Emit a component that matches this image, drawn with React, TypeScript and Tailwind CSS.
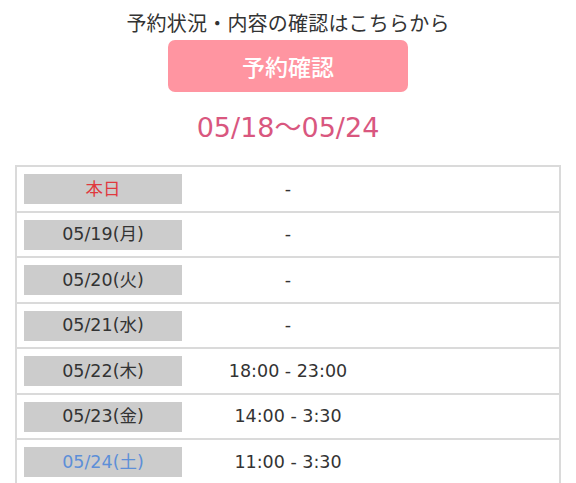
const rows = [
  { label: "本日", time: "-", tone: "text-[#e0393e]" },
  { label: "05/19(月)", time: "-", tone: "text-[#333333]" },
  { label: "05/20(火)", time: "-", tone: "text-[#333333]" },
  { label: "05/21(水)", time: "-", tone: "text-[#333333]" },
  { label: "05/22(木)", time: "18:00 - 23:00", tone: "text-[#333333]" },
  { label: "05/23(金)", time: "14:00 - 3:30", tone: "text-[#333333]" },
  { label: "05/24(土)", time: "11:00 - 3:30", tone: "text-[#5d8fd8]" },
];

export default function App() {
  return (
    <div className="w-[576px] h-[483px] overflow-hidden bg-white font-['Noto_Sans_CJK_JP','Noto_Sans',sans-serif] text-[#333333]">
      <div className="flex flex-col items-center pt-[10px]">
        <p className="text-[20px] leading-[26px] tracking-[0.2px]">予約状況・内容の確認はこちらから</p>
        <button className="mt-[4px] w-[240px] h-[52px] rounded-[7px] bg-[#ff95a1] text-white text-[23px] font-medium flex items-center justify-center">
          予約確認
        </button>
        <p className="mt-[19px] text-[27px] leading-[34px] text-[#d9577f] font-['DejaVu_Sans','Noto_Sans_CJK_JP',sans-serif] font-normal">
          05/18〜05/24
        </p>
      </div>

      <div className="mt-[20px] mx-[15px] border-x-2 border-[#dadada] font-['DejaVu_Sans','Noto_Sans_CJK_JP',sans-serif]">
        {rows.map((r) => (
          <div key={r.label} className="flex items-start border-t-2 border-[#dadada] pl-[7px] pt-[7px] h-[45.5px]">
            <div className={`w-[158px] h-[30px] bg-[#cccccc] flex items-center justify-center text-[17.5px] ${r.tone}`}>
              {r.label}
            </div>
            <div className="w-[212px] h-[30px] flex items-center justify-center text-[17.5px] text-[#333333]">
              {r.time}
            </div>
          </div>
        ))}
      </div>
    </div>
  );
}
